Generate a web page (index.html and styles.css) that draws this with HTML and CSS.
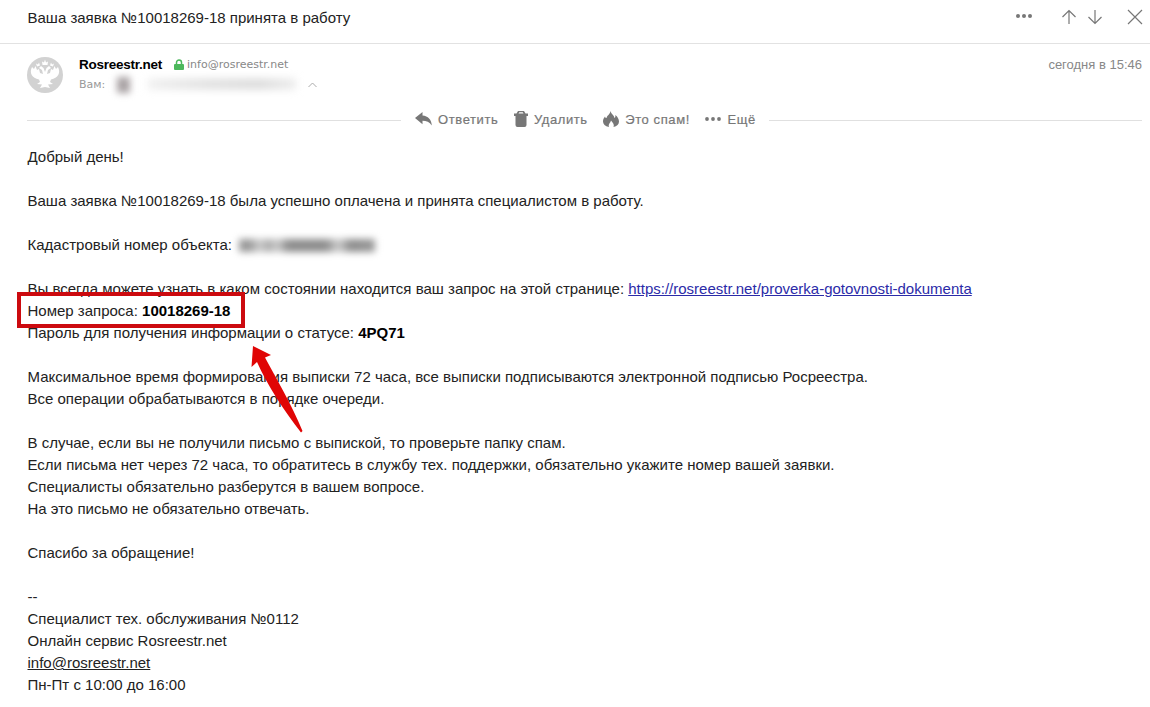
FILE: index.html
```html
<!DOCTYPE html>
<html lang="ru">
<head>
    <meta charset="UTF-8">
    <meta name="viewport" content="width=device-width, initial-scale=1.0">
    <title>Ваша заявка №10018269-18 принята в работу</title>
    <link rel="stylesheet" href="styles.css">
</head>
<body>
  <header class="topbar">
    <h1 class="subject">Ваша заявка №10018269-18 принята в работу</h1>
    <div class="controls">
      <svg class="more" width="18" height="6" viewBox="0 0 18 6"><circle cx="3" cy="3" r="2"/><circle cx="9" cy="3" r="2"/><circle cx="15" cy="3" r="2"/></svg>
      <svg class="up" width="16" height="16" viewBox="0 0 16 16"><path d="M8 15V1.5M1.5 8L8 1.5L14.5 8"/></svg>
      <svg class="down" width="16" height="16" viewBox="0 0 16 16"><path d="M8 1V14.5M1.5 8L8 14.5L14.5 8"/></svg>
      <svg class="close" width="16" height="16" viewBox="0 0 16 16"><path d="M1 1L15 15M15 1L1 15"/></svg>
    </div>
  </header>

  <section class="sender">
    <svg class="avatar" width="36" height="36" viewBox="0 0 36 36">
      <circle cx="18" cy="18" r="18" fill="#d2d2d2"/>
      <!-- two-headed eagle -->
      <path fill="#fff" d="M5 10C2 16 5 21 12 22.500L13 25L10 27L15 27.500L13 31L18 30L23 31L21 27.500L26 27L23 25L24 22.500C31 21 34 16 31 10L29 12L27.500 9L26 13L24 12L23 16L20 17L21 13L24 11L22 9L19.500 11L18 15L16.500 11L14 9L12 11L15 13L16 17L13 16L12 12L10 13L8.500 9L7 12Z"/>
      <path fill="#fff" d="M15.500 8L15 4.500L17 5.500L18 2.500L19 5.500L21 4.500L20.500 8ZM10 9.500L9 6.500L11 7.500L12 5.500L13 8.500ZM23 8.500L24 5.500L25 7.500L27 6.500L26 9.500Z"/>
    </svg>
    <div class="who">
      <div class="from">
        <b class="name">Rosreestr.net</b>
        <svg class="lock" width="10" height="12" viewBox="0 0 10 12"><path d="M2.500 6V3.500a2.500 2.500 0 0 1 5 0V6" fill="none" stroke="#4cb85c" stroke-width="1.500"/><rect y="5" width="10" height="6" rx="1" fill="#4cb85c"/></svg>
        <span class="email">info@rosreestr.net</span>
      </div>
      <div class="to">
        <span class="to-label">Вам:</span>
        <span class="hidden-avatar"></span>
        <span class="hidden-address"></span>
        <svg class="caret" width="9" height="6" viewBox="0 0 9 6"><path d="M0.500 5L4.500 1L8.500 5"/></svg>
      </div>
    </div>
    <time class="date">сегодня в 15:46</time>
  </section>

  <nav class="actions">
    <span class="action reply">
      <svg width="17" height="14" viewBox="0 0 17 14"><path d="M0 6L7.500 0V3.500C13 4 16.500 7.500 16.800 13.500C14.500 10 11.500 8.700 7.500 8.700V12.300Z"/></svg>
      <span>Ответить</span>
    </span>
    <span class="action delete">
      <svg width="14" height="16" viewBox="0 0 14 16"><path d="M0 2.500H2.500L4 0H10L11.500 2.500H14V5H0ZM4.500 2.500H9.500L8.700 1.300H5.300ZM1.500 5H12.500V14Q12.500 16 10.500 16H3.500Q1.500 16 1.500 14Z" fill-rule="evenodd"/></svg>
      <span>Удалить</span>
    </span>
    <span class="action spam">
      <svg width="16" height="16" viewBox="0 0 16 16"><path d="M7.500 0C8 3 11 4 11.500 7C12.500 6.500 12.500 5 12.300 4C14.500 5.500 16 8 16 10.500C16 13.500 14 15.300 10.500 16C11.500 13.500 10 12 8 9.500C7.500 12 5 13 6 16C2 15.200 0 13 0 10.500C0 8.500 .8 7 2 5.500C2.300 6.500 2.800 7 3.500 7C4 4.500 7 3.500 7.500 0Z"/></svg>
      <span>Это спам!</span>
    </span>
    <span class="action more-actions">
      <svg width="16" height="4" viewBox="0 0 16 4"><circle cx="2" cy="2" r="1.900"/><circle cx="8" cy="2" r="1.900"/><circle cx="14" cy="2" r="1.900"/></svg>
      <span>Ещё</span>
    </span>
  </nav>

  <main class="letter">
    <p>Добрый день!</p>
    <p>Ваша заявка №10018269-18 была успешно оплачена и принята специалистом в работу.</p>
    <p class="object">Кадастровый номер объекта: <span class="hidden-number"></span></p>
    <p>Вы всегда можете узнать в каком состоянии находится ваш запрос на этой странице: <a class="link" href="#">https://rosreestr.net/proverka-gotovnosti-dokumenta</a><br>
    Номер запроса: <b>10018269-18</b><br>
    Пароль для получения информации о статусе: <b>4PQ71</b></p>
    <p>Максимальное время формирования выписки 72 часа, все выписки подписываются электронной подписью Росреестра.<br>
    Все операции обрабатываются в порядке очереди.</p>
    <p>В случае, если вы не получили письмо с выпиской, то проверьте папку спам.<br>
    Если письма нет через 72 часа, то обратитесь в службу тех. поддержки, обязательно укажите номер вашей заявки.<br>
    Специалисты обязательно разберутся в вашем вопросе.<br>
    На это письмо не обязательно отвечать.</p>
    <p>Спасибо за обращение!</p>
    <p>--<br>
    Специалист тех. обслуживания №0112<br>
    Онлайн сервис Rosreestr.net<br>
    <a class="mail" href="#">info@rosreestr.net</a><br>
    Пн-Пт с 10:00 до 16:00</p>
  </main>

  <div class="mark-box"></div>
  <svg class="mark-arrow" width="56" height="90" viewBox="0 0 56 90"><path d="M3 1L21 10L15 12.500C26 33 42 60 52.500 86L51 87.500C35 67 17 40 7 17L1.500 22Z"/></svg>
</body>
</html>
```
FILE: styles.css
```css
body {
    margin: 0;
    background-color: #fff;
    color: #222;
    font-family: "Liberation Sans", Arial, sans-serif;
    font-size: 15px;
    position: relative;
    height: 707px;
    overflow: hidden;
}

.topbar {
    display: flex;
    justify-content: space-between;
    height: 43px;
    padding: 0 7px 0 27.5px;
    border-bottom: 1px solid #e2e2e2;
}

.subject {
    margin: 0;
    font-size: 15px;
    font-weight: normal;
    line-height: 36px;
}

.controls {
    display: flex;
    align-items: center;
    height: 34px;
}

.controls svg {
    fill: none;
    stroke: #777;
    stroke-width: 1.2;
}

.controls .more {
    fill: #777;
    stroke: none;
    margin: 0 28px 2px 0;
}

.up {
    margin-right: 10px;
}

.down {
    margin-right: 24px;
}

.sender {
    display: flex;
    height: 62px;
    padding: 13px 8px 0 27px;
    box-sizing: border-box;
}

.who {
    margin-left: 16px;
    flex: 1;
}

.from, .to {
    display: flex;
    align-items: center;
    height: 15px;
}

.to {
    height: 24px;
    color: #999;
}

.name {
    color: #000;
    font-size: 13.5px;
    letter-spacing: -0.25px;
}

.lock {
    margin: 0 3px 0 12px;
}

.email {
    color: #888;
    font-family: "DejaVu Sans", sans-serif;
    font-size: 11px;
}

.to-label {
    font-family: "DejaVu Sans", sans-serif;
    font-size: 11px;
}

.hidden-avatar {
    width: 13px;
    height: 16px;
    margin: 2px 0 0 12px;
    background-color: #a9a2a4;
    filter: blur(3.5px);
}

.hidden-address {
    width: 148px;
    height: 10px;
    margin-left: 18px;
    background: linear-gradient(to right, #eee, #dedede 40%, #d8d8d8 75%, #ebebeb);
    filter: blur(4px);
}

.caret {
    margin: 1px 0 0 12px;
    fill: none;
    stroke: #aaa;
}

.date {
    color: #888;
    font-size: 13px;
    line-height: 15px;
}

.actions {
    display: flex;
    align-items: center;
    height: 28px;
    padding: 0 8px 0 27px;
    color: #777;
    font-size: 13px;
}

.actions::before, .actions::after {
    content: "";
    height: 1px;
    margin-top: 1px;
    background-color: #e0e0e0;
}

.actions::before {
    width: 374px;
    margin-right: 14px;
}

.actions::after {
    flex: 1;
    margin-left: 14px;
}

.action {
    display: flex;
    align-items: center;
    gap: 6px;
    margin-right: 15.5px;
    padding-bottom: 2px;
    letter-spacing: 0.6px;
    -webkit-text-stroke: 0.2px #777;
}

.action svg {
    fill: #777;
}

.more-actions {
    margin-right: -1px;
}

.letter {
    padding: 12px 27.5px 0;
    line-height: 22px;
}

.letter p {
    margin: 0 0 22px;
}

.letter b {
    color: #000;
}

.object {
    display: flex;
    align-items: center;
}

.hidden-number {
    width: 136px;
    height: 13px;
    margin-left: 7px;
    background: linear-gradient(to right, #999 8%, #ccc 15%, #aaa 22%, #ccc 28%, #8c8c8c 36%, #8c8c8c 64%, #ccc 73%, #8c8c8c 82%, #999);
    filter: blur(3.5px);
}

.link {
    color: #2b2ba8;
}

.mail {
    color: #222;
}

/* red annotation over the letter */
.mark-box {
    position: absolute;
    left: 17px;
    top: 292px;
    width: 228px;
    height: 36px;
    box-sizing: border-box;
    border: 4px solid #cc0a0f;
}

.mark-arrow {
    position: absolute;
    left: 250px;
    top: 345px;
    fill: #e00505;
}
```
